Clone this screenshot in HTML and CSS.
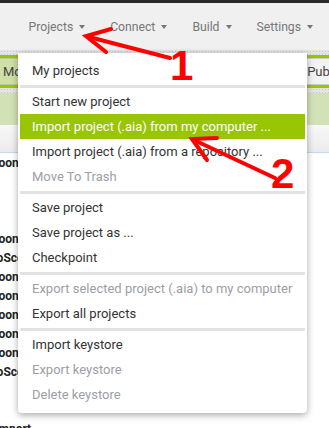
FILE: index.html
```html
<!DOCTYPE html>
<html lang="en">
<head>
  <meta charset="UTF-8" />
  <title>Projects menu</title>
  <link rel="stylesheet" href="styles.css">
</head>
<body>
  <div class="topline"></div>

  <!-- Top menu bar -->
  <nav class="navbar">
    <span class="nav-item">Projects</span>
    <span class="nav-item">Connect</span>
    <span class="nav-item">Build</span>
    <span class="nav-item">Settings</span>
  </nav>
  <div class="dots"></div>

  <!-- Designer toolbar -->
  <div class="toolbar">
    <span class="tool-btn tool-green">Move</span>
    <span class="tool-btn tool-gray">Publish</span>
  </div>
  <div class="dots"></div>
  <div class="panel-head"></div>
  <div class="panel-sub"></div>

  <!-- Components tree (mostly under the menu) -->
  <div class="tree">
    <div class="tree-row">Balloon</div>
    <div class="tree-row"></div>
    <div class="tree-row"></div>
    <div class="tree-row"></div>
    <div class="tree-row">Balloon</div>
    <div class="tree-row">AutoScore</div>
    <div class="tree-row">Balloon</div>
    <div class="tree-row">Balloon</div>
    <div class="tree-row">Balloon</div>
    <div class="tree-row">Balloon</div>
    <div class="tree-row">Balloon</div>
    <div class="tree-row">AutoScore</div>
    <div class="tree-row"></div>
    <div class="tree-row"></div>
    <div class="tree-row top">Import</div>
  </div>

  <!-- Projects dropdown -->
  <div class="menu">
    <div class="menu-item">My projects</div>
    <div class="menu-sep"></div>
    <div class="menu-item">Start new project</div>
    <div class="menu-item active">Import project (.aia) from my computer ...</div>
    <div class="menu-item">Import project (.aia) from a repository ...</div>
    <div class="menu-item disabled">Move To Trash</div>
    <div class="menu-sep"></div>
    <div class="menu-item">Save project</div>
    <div class="menu-item">Save project as ...</div>
    <div class="menu-item">Checkpoint</div>
    <div class="menu-sep"></div>
    <div class="menu-item disabled">Export selected project (.aia) to my computer</div>
    <div class="menu-item">Export all projects</div>
    <div class="menu-sep"></div>
    <div class="menu-item">Import keystore</div>
    <div class="menu-item disabled">Export keystore</div>
    <div class="menu-item disabled">Delete keystore</div>
  </div>

  <!-- Red annotations -->
  <svg class="marks" width="329" height="428" viewBox="0 0 329 428">
    <g stroke="#f00" stroke-width="4" fill="none" stroke-linecap="round" stroke-linejoin="miter">
      <line x1="170" y1="58" x2="89" y2="37" />
      <polyline points="111,29 86,36 106,52" />
      <line x1="275" y1="178" x2="196" y2="141" />
      <polyline points="217,138 192,139 207,160" />
    </g>
    <text class="mark-num" x="170" y="80">1</text>
    <text class="mark-num" x="271" y="188">2</text>
  </svg>
</body>
</html>
```

FILE: styles.css
```css
body {
  margin: 0;
  width: 329px;
  height: 428px;
  overflow: hidden;
  position: relative;
  font-family: Roboto, "Liberation Sans", sans-serif;
  background: #fff;
}

.topline {
  height: 3px;
  background: #2a2a2a;
}

.navbar {
  height: 47px;
  display: flex;
  align-items: center;
  padding-left: 16px;
  background: #f0f0f0;
}

.nav-item {
  display: inline-flex;
  align-items: center;
  padding: 0 12.5px;
  font-size: 12.2px;
  color: #777;
  white-space: nowrap;
}

.nav-item::after {
  content: "";
  margin-left: 6px;
  border-left: 3px solid transparent;
  border-right: 3px solid transparent;
  border-top: 4px solid #777;
}

.dots {
  height: 5px;
  background-color: #e4e4e4;
  background-image: radial-gradient(#c8c8c8 30%, transparent 31%);
  background-size: 3px 3px;
}

.toolbar {
  height: 27px;
  padding: 3px 0;
  display: flex;
  justify-content: space-between;
  background: #99c604;
  overflow: hidden;
}

.tool-btn {
  display: flex;
  align-items: center;
  padding: 0 8px;
  font-size: 13px;
  color: #444;
  border: 1px solid #b9c99a;
}

.tool-green {
  margin-left: -6px;
  background: #cfe0a6;
}

.tool-gray {
  margin-right: -30px;
  background: #f2f2f2;
  border-color: #ccc;
}

.panel-head {
  height: 32px;
  background: #d3e2b6;
}

.panel-sub {
  height: 27px;
  background: linear-gradient(#f8f8f8, #ececec);
  border-bottom: 1px solid #c5d6f4;
}

.tree {
  margin-left: -22px;
  padding-top: 1px;
}

.tree-row {
  height: 19px;
  line-height: 19px;
  font-size: 12px;
  font-weight: bold;
  color: #222;
  white-space: nowrap;
}

.tree-row.top {
  padding-left: 17px;
}

.menu {
  position: absolute;
  left: 18px;
  top: 53px;
  width: 285px;
  padding: 5px 2px 6px;
  background: #fff;
  border-radius: 0 0 4px 4px;
  box-shadow: 0 2px 7px rgba(0, 0, 0, 0.35);
}

.menu-item {
  height: 25px;
  line-height: 25px;
  padding-left: 12px;
  font-size: 13px;
  color: #333;
  white-space: nowrap;
}

.menu-item.active {
  background: #99c604;
  color: #fff;
}

.menu-item.disabled {
  color: #9ca0a6;
}

.menu-sep {
  height: 3px;
  margin: 2px 0 1px;
  background: #e2e2e2;
}

.marks {
  position: absolute;
  left: 0;
  top: 0;
}

.mark-num {
  font-family: "Liberation Sans", Arial, sans-serif;
  font-size: 42px;
  font-weight: bold;
  fill: #f00;
}
```
